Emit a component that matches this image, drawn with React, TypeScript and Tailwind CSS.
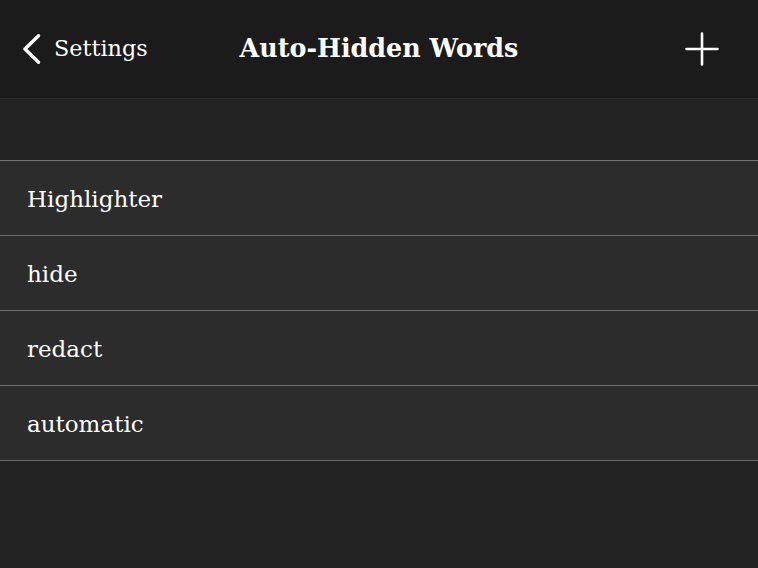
const words = ["Highlighter", "hide", "redact", "automatic"];

export default function App() {
  return (
    <div className="w-[758px] h-[568px] bg-[#222222] flex flex-col text-white font-['DejaVu_Serif',serif] overflow-hidden">
      {/* Nav bar */}
      <header className="relative h-[99px] shrink-0 bg-[#1b1b1b] border-b border-[#2b2b2b] flex items-center px-[22px]">
        <button className="flex items-center gap-[12px] text-[22.3px] leading-none">
          <svg width="20" height="30" viewBox="0 0 20 30" fill="none" stroke="white" strokeWidth="3.4" strokeLinecap="round" strokeLinejoin="round">
            <path d="M16.5 1.8 L3 15 L16.5 28.2" />
          </svg>
          <span className="pb-[1px]">Settings</span>
        </button>
        <h1 className="absolute left-0 right-0 text-center text-[25.4px] font-bold leading-none pointer-events-none">
          Auto-Hidden Words
        </h1>
        <button className="ml-auto mr-[17px]">
          <svg width="34" height="34" viewBox="0 0 34 34" fill="none" stroke="white" strokeWidth="2.6" strokeLinecap="round">
            <path d="M17 1.5 V32.5 M1.5 17 H32.5" />
          </svg>
        </button>
      </header>

      <div className="h-[61px] shrink-0" />

      {/* Word list */}
      <ul className="border-t border-[#767676]">
        {words.map((w) => (
          <li
            key={w}
            className="h-[75px] flex items-center pl-[27px] pt-[2px] bg-[#2c2c2c] border-b border-[#6c6c6c] text-[23px]"
          >
            {w}
          </li>
        ))}
      </ul>
    </div>
  );
}
